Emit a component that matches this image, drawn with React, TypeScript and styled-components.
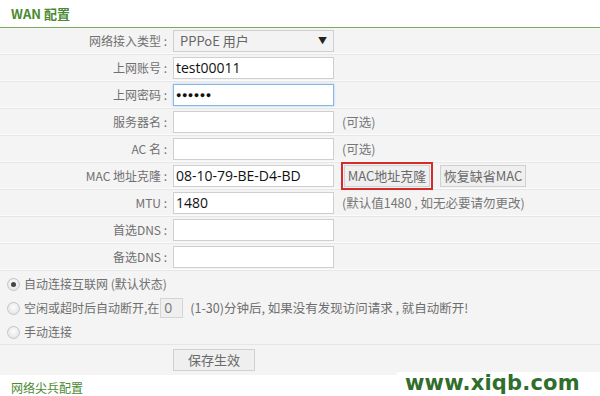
import React from 'react';
import styled, { createGlobalStyle, css } from 'styled-components';

const GlobalStyle = createGlobalStyle`
    html, body {
        margin: 0;
        padding: 0;
        background: #fff;
    }
    body {
        font-family: "Noto Sans CJK SC", "Noto Sans", sans-serif;
        font-size: 12px;
        color: #666;
    }
`

const Page = styled.div`
    position: relative;
    width: 600px;
    height: 396px;
    overflow: hidden;
`

const Title = styled.div`
    height: 27px;
    line-height: 28px;
    padding-left: 11px;
    font-size: 13px;
    font-weight: 700;
    color: #4b8a32;
    border-bottom: 1px solid #7aab5e;
`

const Panel = styled.div`
    background: #f4f4f4;
`

const Row = styled.div`
    display: grid;
    grid-template-columns: 167px 1fr;
    column-gap: 6px;
    align-items: center;
    height: 26px;
    border-bottom: 1px solid #e6e6e6;
    box-shadow: inset 0 -1px 0 #fbfbfb;
`

const Label = styled.div`
    text-align: right;
    white-space: nowrap;
    color: #707070;
    line-height: 18px;
`

const Field = styled.div`
    display: flex;
    align-items: center;
    gap: 7px;
`

const inputBox = css`
    box-sizing: border-box;
    width: 161px;
    height: 22px;
    border: 1px solid #cfcfcf;
    background: #fff;
    padding: 0 2px;
    font-family: "Open Sans", "Noto Sans", sans-serif;
    font-size: 14px;
    line-height: 20px;
    color: #111;
`

const TextBox = styled.div<{ $focused?: boolean }>`
    ${inputBox}
    ${p => p.$focused && css`
        border-color: #86b7e8;
        box-shadow: 0 0 2px #a9cdf2;
    `}
`

const Dots = styled.span`
    font-size: 9px;
    letter-spacing: 0.5px;
    vertical-align: 2px;
`

const SelectBox = styled.div`
    ${inputBox}
    background: #f3f3f3;
    color: #666;
    font-family: "Noto Sans CJK SC", "Noto Sans", sans-serif;
    font-size: 13px;
    padding: 0 6px;
    display: flex;
    justify-content: space-between;
    align-items: center;
`

const Arrow = styled.span`
    font-size: 9px;
    color: #222;
`

const Hint = styled.span`
    color: #777;
    white-space: nowrap;
    margin-left: 1px;
    font-size: 12.5px;
    line-height: 18px;
`

const Button = styled.div<{ $marked?: boolean; $width: number }>`
    box-sizing: border-box;
    width: ${p => p.$width}px;
    height: 22px;
    line-height: 20px;
    text-align: center;
    border: 1px solid #d0d0d0;
    background: #efefef;
    color: #6a6a6a;
    font-size: 13px;
    white-space: nowrap;
    ${p => p.$marked && css`
        outline: 2px solid #d42a2a;
        outline-offset: 1px;
        margin: 0 3px 0 3px;
    `}
`

const RadioGroup = styled.div`
    padding: 1px 0 0 7px;
    border-bottom: 1px solid #e6e6e6;
`

const RadioLine = styled.div`
    display: flex;
    align-items: center;
    height: 24px;
    line-height: 18px;
    gap: 4px;
    white-space: nowrap;
    color: #6e6e6e;
`

const Tail = styled.span`
    font-size: 12.5px;
`

const Radio = styled.span<{ $checked?: boolean }>`
    box-sizing: border-box;
    width: 13px;
    height: 13px;
    border-radius: 50%;
    border: 1px solid #c4c4c4;
    background: radial-gradient(circle at 50% 40%, #fdfdfd, #dedede);
    display: flex;
    align-items: center;
    justify-content: center;
    &::after {
        content: '';
        display: ${p => (p.$checked ? 'block' : 'none')};
        width: 5px;
        height: 5px;
        border-radius: 50%;
        background: #444;
    }
`

const SmallBox = styled.span`
    box-sizing: border-box;
    display: inline-block;
    width: 23px;
    height: 20px;
    line-height: 18px;
    border: 1px solid #d4d4d4;
    background: #efefef;
    color: #777;
    font-family: "Open Sans", sans-serif;
    font-size: 14px;
    padding-left: 3px;
    margin: 0 3px 0 -3px;
`

const SaveRow = styled.div`
    height: 30px;
    display: flex;
    align-items: center;
    padding-left: 173px;
`

const Footer = styled.div`
    padding: 4px 0 0 11px;
    color: #4b8a32;
    font-size: 12px;
    line-height: 18px;
`

const Watermark = styled.div`
    position: absolute;
    left: 397px;
    right: 0;
    bottom: 0;
    height: 24px;
    background: #fff;
    padding-left: 8px;
    font-family: "DejaVu Sans", sans-serif;
    font-weight: 700;
    font-size: 21px;
    line-height: 22px;
    color: #2f6e2c;
    letter-spacing: 0.2px;
`

const App = () => {
    return (
        <Page>
            <GlobalStyle />
            <Title>WAN 配置</Title>
            <Panel>
                <Row>
                    <Label>网络接入类型 :</Label>
                    <Field>
                        <SelectBox>PPPoE 用户<Arrow>▼</Arrow></SelectBox>
                    </Field>
                </Row>
                <Row>
                    <Label>上网账号 :</Label>
                    <Field><TextBox>test00011</TextBox></Field>
                </Row>
                <Row>
                    <Label>上网密码 :</Label>
                    <Field><TextBox $focused><Dots>●●●●●●</Dots></TextBox></Field>
                </Row>
                <Row>
                    <Label>服务器名 :</Label>
                    <Field><TextBox /><Hint>(可选)</Hint></Field>
                </Row>
                <Row>
                    <Label>AC 名 :</Label>
                    <Field><TextBox /><Hint>(可选)</Hint></Field>
                </Row>
                <Row>
                    <Label>MAC 地址克隆 :</Label>
                    <Field>
                        <TextBox>08-10-79-BE-D4-BD</TextBox>
                        <Button $marked $width={86}>MAC地址克隆</Button>
                        <Button $width={86}>恢复缺省MAC</Button>
                    </Field>
                </Row>
                <Row>
                    <Label>MTU :</Label>
                    <Field><TextBox>1480</TextBox><Hint>(默认值1480 , 如无必要请勿更改)</Hint></Field>
                </Row>
                <Row>
                    <Label>首选DNS :</Label>
                    <Field><TextBox /></Field>
                </Row>
                <Row>
                    <Label>备选DNS :</Label>
                    <Field><TextBox /></Field>
                </Row>
                <RadioGroup>
                    <RadioLine><Radio $checked />自动连接互联网 (默认状态)</RadioLine>
                    <RadioLine>
                        <Radio />空闲或超时后自动断开,在<SmallBox>0</SmallBox>
                        <Tail>(1-30)分钟后, 如果没有发现访问请求 , 就自动断开!</Tail>
                    </RadioLine>
                    <RadioLine><Radio />手动连接</RadioLine>
                </RadioGroup>
                <SaveRow>
                    <Button $width={82}>保存生效</Button>
                </SaveRow>
            </Panel>
            <Footer>网络尖兵配置</Footer>
            <Watermark>www.xiqb.com</Watermark>
        </Page>
    );
};

export default App;
